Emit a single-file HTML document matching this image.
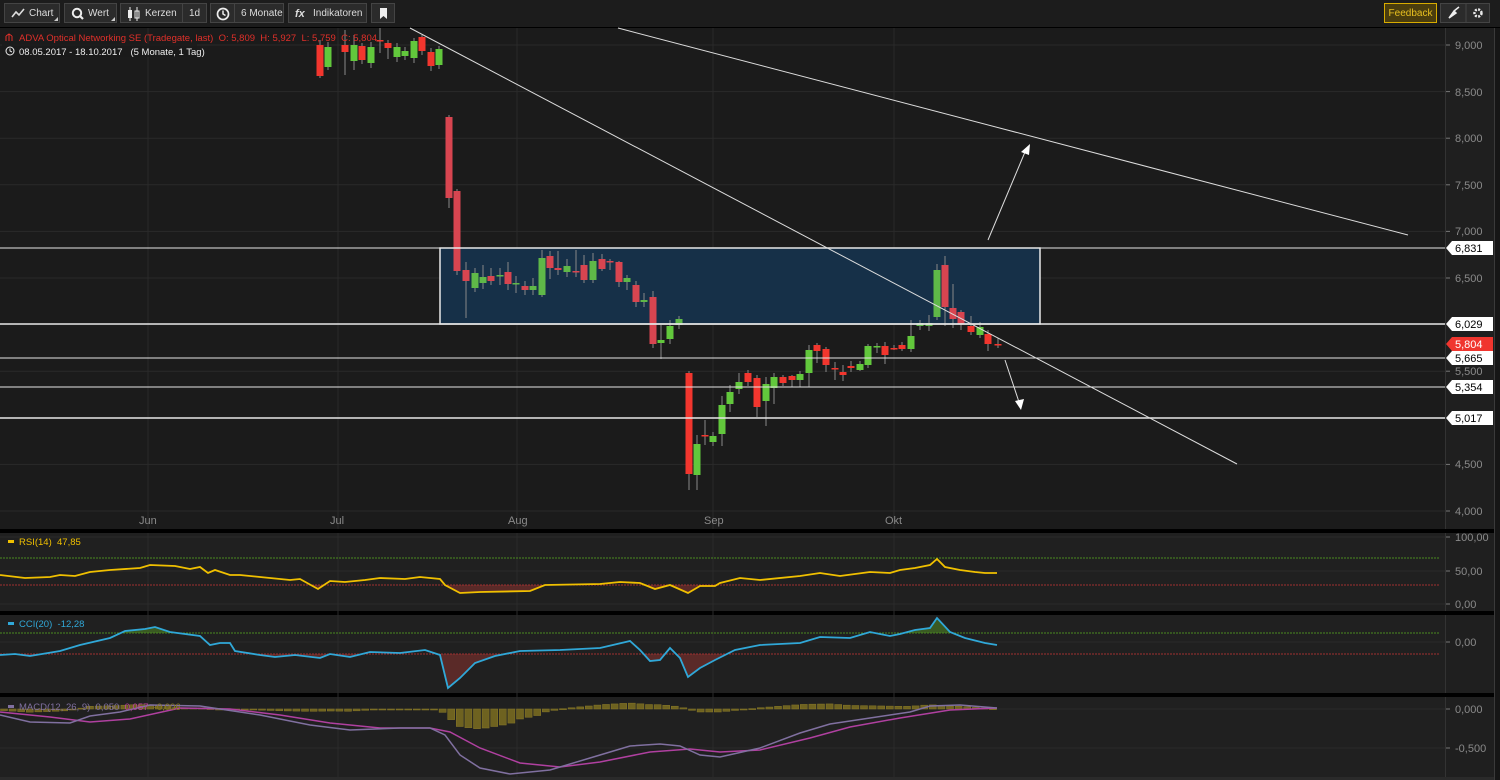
<!DOCTYPE html>
<html><head><meta charset="utf-8">
<style>
html,body{margin:0;padding:0;background:#1a1a1a;width:1500px;height:780px;overflow:hidden;font-family:"Liberation Sans",sans-serif;}
#tb{position:absolute;left:0;top:0;width:1500px;height:27px;background:#1c1c1c;border-bottom:1px solid #000;}
.b{position:absolute;top:3px;height:20px;background:#2b2b2b;border:1px solid #444;color:#ddd;font-size:10px;line-height:20px;box-sizing:border-box;}
.b span{position:absolute;top:0}
.tri{position:absolute;right:1px;bottom:1px;width:0;height:0;border-left:4px solid transparent;border-bottom:4px solid #ccc;}
.dv{position:absolute;top:0;width:1px;height:18px;background:#444;}
svg{position:absolute;left:0;top:0}
</style></head><body>
<div id="tb">
 <div class="b" style="left:4px;width:56px"><svg width="16" height="18" style="left:5px;top:1px"><polyline points="2,12 6,7 9,10 14,4" fill="none" stroke="#ddd" stroke-width="1.6"/></svg><span style="left:24px">Chart</span><div class="tri"></div></div>
 <div class="b" style="left:64px;width:53px"><svg width="16" height="18" style="left:5px;top:1px"><circle cx="7" cy="8" r="4.2" fill="none" stroke="#eee" stroke-width="2"/><line x1="10" y1="11" x2="13" y2="14" stroke="#eee" stroke-width="2.2"/></svg><span style="left:23px">Wert</span><div class="tri"></div></div>
 <div class="b" style="left:120px;width:87px"><svg width="18" height="18" style="left:5px;top:1px"><line x1="4" y1="2" x2="4" y2="16" stroke="#eee"/><rect x="2" y="5" width="4" height="8" fill="#eee"/><line x1="11" y1="2" x2="11" y2="16" stroke="#eee"/><rect x="9" y="6" width="4" height="7" fill="none" stroke="#eee"/></svg><span style="left:24px">Kerzen</span><div class="dv" style="left:61px"></div><span style="left:68px">1d</span></div>
 <div class="b" style="left:210px;width:74px"><svg width="16" height="18" style="left:5px;top:1px"><circle cx="7" cy="9" r="5.5" fill="none" stroke="#eee" stroke-width="1.7"/><polyline points="7,5.5 7,9 9.5,10.5" fill="none" stroke="#eee" stroke-width="1.5"/></svg><div class="dv" style="left:23px"></div><span style="left:30px">6 Monate</span></div>
 <div class="b" style="left:288px;width:79px"><span style="left:6px;font-style:italic;font-weight:bold;font-size:11px">fx</span><span style="left:24px">Indikatoren</span></div>
 <div class="b" style="left:371px;width:24px"><svg width="12" height="18" style="left:6px;top:1px"><path d="M2,3 H9 V14 L5.5,11 L2,14 Z" fill="#eee"/></svg></div>
 <div class="b" style="left:1384px;width:53px;background:#4a3d0e;border-color:#d8ac00;color:#e8c020;text-align:center">Feedback</div>
 <div class="b" style="left:1440px;width:50px"><svg width="50" height="18" style="left:0;top:0"><path d="M8,14 L13,7 L15,9 Z M13,7 L18,3" fill="#eee" stroke="#eee" stroke-width="1.5"/><line x1="25" y1="0" x2="25" y2="18" stroke="#444"/><circle cx="37" cy="9" r="3.5" fill="none" stroke="#eee" stroke-width="2.5" stroke-dasharray="2 1.3"/></svg></div>
</div>
<svg id="s" width="1500" height="780" style="top:0">
 <rect x="0" y="28" width="1445" height="752" fill="#1b1b1b"/>
 <rect x="1445" y="28" width="49" height="752" fill="#1f1f1f"/>
 <line x1="1445.5" y1="28" x2="1445.5" y2="780" stroke="#333"/>
 <rect x="1494" y="28" width="6" height="752" fill="#161616"/>
 <line x1="1494.5" y1="28" x2="1494.5" y2="780" stroke="#3a3a3a"/>
 <rect x="0" y="533" width="1445" height="78" fill="#202020"/>
 <rect x="0" y="615" width="1445" height="78" fill="#202020"/>
 <rect x="0" y="697" width="1445" height="80" fill="#202020"/>
 <rect x="0" y="529" width="1494" height="4" fill="#000"/>
 <rect x="0" y="611" width="1494" height="4" fill="#000"/>
 <rect x="0" y="693" width="1494" height="4" fill="#000"/>
 <rect x="0" y="777" width="1494" height="3" fill="#2a2a2a"/>
 <g id="grid" stroke="#2a2a2a" stroke-width="1"></g>
 <g id="main"></g>
 <g font-size="11" fill="#8a8a8a" font-family="Liberation Sans, sans-serif">
  <text x="139" y="524">Jun</text><text x="330" y="524">Jul</text><text x="508" y="524">Aug</text><text x="704" y="524">Sep</text><text x="885" y="524">Okt</text>
  <text x="1455" y="49">9,000</text><text x="1455" y="96">8,500</text><text x="1455" y="142">8,000</text><text x="1455" y="189">7,500</text><text x="1455" y="235">7,000</text><text x="1455" y="282">6,500</text><text x="1455" y="375">5,500</text><text x="1455" y="468">4,500</text><text x="1455" y="515">4,000</text>
  <text x="1455" y="541">100,00</text><text x="1455" y="575">50,00</text><text x="1455" y="608">0,00</text>
  <text x="1455" y="646">0,00</text>
  <text x="1455" y="713">0,000</text><text x="1455" y="752">-0,500</text>
 </g>
 <g id="tags" font-size="11" font-family="Liberation Sans, sans-serif"></g>
 <rect x="2" y="44" width="195" height="13" fill="#1a1a1a" opacity=".8"/>
 <text x="19" y="41" font-size="9.5" fill="#e0302a" font-family="Liberation Sans, sans-serif">ADVA Optical Networking SE (Tradegate, last)&#160; O: 5,809&#160; H: 5,927&#160; L: 5,759&#160; C: 5,804</text>
 <path d="M6,41 v-5 M9,41 v-7 M12,41 v-5 M6,36 l3,-2 l3,2" stroke="#e0302a" fill="none"/>
 <circle cx="10" cy="51" r="4" fill="none" stroke="#eee"/><polyline points="10,48.5 10,51 12,52" fill="none" stroke="#eee"/>
 <text x="19" y="55" font-size="9.5" fill="#eee" font-family="Liberation Sans, sans-serif">08.05.2017 - 18.10.2017&#160;&#160; (5 Monate, 1 Tag)</text>
 <rect x="8" y="540" width="6" height="3" fill="#f0c000"/><text x="19" y="545" font-size="9.5" fill="#f0c000" font-family="Liberation Sans, sans-serif">RSI(14)&#160; 47,85</text>
 <rect x="8" y="622" width="6" height="3" fill="#30a8d8"/><text x="19" y="627" font-size="9.5" fill="#30a8d8" font-family="Liberation Sans, sans-serif">CCI(20)&#160; -12,28</text>
 <g id="macdlbl"></g>
</svg>
<script>
const NS="http://www.w3.org/2000/svg";
function el(p,t,a){const e=document.createElementNS(NS,t);for(const k in a)e.setAttribute(k,a[k]);p.appendChild(e);return e;}
const g=document.getElementById('grid'),m=document.getElementById('main'),tg=document.getElementById('tags');
[45,91.6,138.2,184.8,231.4,278,324.6,371.2,417.8,464.4,511].forEach(y=>el(g,'line',{x1:0,x2:1445,y1:y,y2:y}));
[537,571,604,642,709,748].forEach(y=>el(g,'line',{x1:0,x2:1445,y1:y,y2:y}));
[148,338,517,713,894].forEach(x=>{el(g,'line',{x1:x,x2:x,y1:28,y2:529});el(g,'line',{x1:x,x2:x,y1:533,y2:777});});
[45,91.6,138.2,184.8,231.4,278,371.2,464.4,511,537,571,604,642,709,748].forEach(y=>el(g,'line',{x1:1446,x2:1450,y1:y,y2:y,stroke:'#777'}));
el(m,'rect',{x:440,y:248,width:600,height:76,fill:'#163048',stroke:'none'});
const C=[[320,45,76,40,78],[328,67,47,42,70],[345,45,52,30,75],[354,61,45,35,70],[362,46,60,43,64],[371,63,47,42,68],[380,40,40,28,53],[388,43,48,40,59],[397,57,47,43,62],[405,56,51,47,60],[414,58,41,38,63],[422,37,51,35,55],[431,52,66,48,71],[439,65,49,46,69],
[449,117,198,115,208],[457,191,271,189,275],[466,270,281,262,318],[475,288,273,268,292],[483,283,277,265,289],[491,276,281,268,285],[500,276,275,268,285],[508,272,284,262,290],[516,284,283,276,293],[525,286,290,281,295],[533,290,286,278,295],[542,295,258,250,297],[550,256,268,251,279],[558,268,270,251,275],[567,272,266,259,277],[576,271,271,250,277],[584,265,280,255,283],[593,280,261,253,283],[602,259,269,254,271],[610,261,262,259,270],[619,262,282,261,287],[627,282,278,275,290],[636,285,302,281,307],[644,302,300,293,307],[653,297,344,291,348],[661,343,340,325,359],[670,339,326,320,344],[679,325,319,316,329],
[689,373,474,371,490],[697,475,444,435,490],[705,435,435,420,445],[713,442,436,432,446],[722,434,405,396,446],[730,404,392,385,412],[739,389,382,373,394],[748,373,382,370,386],[757,378,407,375,417],[766,401,384,377,426],[774,388,377,373,404],[783,377,383,375,386],[792,376,380,375,387],[800,380,374,371,387],[809,373,350,345,387],[817,345,351,343,363],[826,349,365,347,372],[835,368,368,362,380],[843,372,375,365,381],[851,366,368,361,372],[860,370,364,361,371],[868,365,346,344,368],[877,347,346,343,353],[885,346,355,342,364],[894,348,348,345,350],[902,345,349,342,351],[911,349,336,320,352],[920,326,323,320,330],[929,326,323,315,331],[937,317,270,264,320],[945,265,307,256,326],[953,308,319,284,328],[961,312,324,310,330],[971,326,332,316,335],[980,335,327,322,338],[988,334,344,330,351],[998,344,344,338,348]];
C.forEach(([x,o,c,h,l])=>{const up=c<o;const inb=x>440&&x<1040&&Math.min(o,c)<324;const col=up?(inb?'#5fb848':'#62c83c'):(inb?'#d84550':'#f2362e');
el(m,'line',{x1:x,x2:x,y1:h,y2:l,stroke:'#888','stroke-width':1});
el(m,'rect',{x:x-3.5,y:Math.min(o,c),width:7,height:Math.max(1.5,Math.abs(o-c)),fill:col});});
el(m,'rect',{x:440,y:248,width:600,height:76,fill:'none',stroke:'#e8e8e8','stroke-width':1.5});
[[248,1],[324,1.5],[358,1],[387,1],[418,1.5]].forEach(([y,w])=>el(m,'line',{x1:0,x2:1445,y1:y,y2:y,stroke:'#e6e6e6','stroke-width':w}));
el(m,'line',{x1:410,y1:28,x2:1237,y2:464,stroke:'#ddd','stroke-width':1});
el(m,'line',{x1:618,y1:28,x2:1408,y2:235,stroke:'#ddd','stroke-width':1});
el(m,'line',{x1:988,y1:240,x2:1025,y2:152,stroke:'#ddd'});el(m,'polygon',{points:'1030,144 1021,152 1029,155',fill:'#fff'});
el(m,'line',{x1:1005,y1:360,x2:1019,y2:402,stroke:'#ddd'});el(m,'polygon',{points:'1021,410 1015,401 1024,399',fill:'#fff'});
[[248,'6,831','#fff','#000'],[324,'6,029','#fff','#000'],[344,'5,804','#f0352e','#fff'],[358,'5,665','#fff','#000'],[387,'5,354','#fff','#000'],[418,'5,017','#fff','#000']].forEach(([y,t,bg,fg])=>{
el(tg,'polygon',{points:`1446,${y} 1452,${y-7} 1493,${y-7} 1493,${y+7} 1452,${y+7}`,fill:bg});
const tx=el(tg,'text',{x:1455,y:y+4,fill:fg});tx.textContent=t;});
function interp(pts,x){for(let i=0;i<pts.length-1;i++){if(x>=pts[i][0]&&x<=pts[i+1][0]){const t=(x-pts[i][0])/(pts[i+1][0]-pts[i][0]);return pts[i][1]+t*(pts[i+1][1]-pts[i][1]);}}return pts[pts.length-1][1];}
function P(s){const a=s.split(/[ ,]+/).map(Number),r=[];for(let i=0;i<a.length;i+=2)r.push([a[i],a[i+1]]);return r;}
function fillBand(pts,ref,above,col){let x0=pts[0][0],x1=pts[pts.length-1][0];let poly=[];for(let x=x0;x<=x1;x++){let y=interp(pts,x);y=above?Math.min(y,ref):Math.max(y,ref);poly.push(x+','+y.toFixed(1));}el(m,'polygon',{points:x0+','+ref+' '+poly.join(' ')+' '+x1+','+ref,fill:col});}
const rsi=P("0,575 25,578 50,577 60,575 75,576 90,572 110,570 140,568 150,565 175,566 190,569 200,567 208,573 215,570 230,575 240,575 260,577 290,580 300,579 318,589 330,581 345,582 355,581 365,580 380,578 405,579 420,577 440,579 445,585 460,593 480,592 530,591 545,585 600,584 620,582 640,583 655,589 670,585 688,593 700,586 715,586 720,583 740,578 760,580 800,576 820,573 840,576 870,572 890,573 900,570 915,568 930,565 937,559 945,567 960,570 975,572 985,573 997,573");
fillBand(rsi,585,false,'#5a2a28');
el(m,'line',{x1:0,x2:1440,y1:558,y2:558,stroke:'#4a8a20','stroke-dasharray':'2 1'});
el(m,'line',{x1:0,x2:1440,y1:585,y2:585,stroke:'#a03030','stroke-dasharray':'2 1'});
el(m,'polyline',{points:rsi.map(p=>p.join(',')).join(' '),fill:'none',stroke:'#f0c000','stroke-width':1.8});
const cci=P("0,655 15,654 30,656 60,651 80,645 110,638 125,631 145,629 155,627 170,632 200,636 210,645 220,643 230,643 235,651 260,655 275,657 295,655 320,658 330,654 350,657 370,652 400,653 425,650 440,655 448,688 460,678 475,663 495,656 520,651 560,650 600,648 630,641 640,650 650,661 660,660 670,648 680,658 688,677 700,668 715,660 735,650 760,645 800,643 820,637 850,638 870,632 890,636 900,634 915,630 930,628 937,618 950,632 965,638 985,643 997,645");
fillBand(cci,633,true,'#3a5a22');fillBand(cci,654,false,'#5a2a28');
el(m,'line',{x1:0,x2:1440,y1:633,y2:633,stroke:'#4a8a20','stroke-dasharray':'2 1'});
el(m,'line',{x1:0,x2:1440,y1:654,y2:654,stroke:'#a03030','stroke-dasharray':'2 1'});
el(m,'polyline',{points:cci.map(p=>p.join(',')).join(' '),fill:'none',stroke:'#30a8d8','stroke-width':1.8});
const mac=P("0,715 30,722 70,723 90,716 120,712 150,705 200,706 260,715 310,725 350,730 400,728 430,728 445,735 460,755 480,768 510,774 550,770 600,755 630,746 660,744 680,746 700,755 720,757 760,748 800,733 830,724 870,718 910,712 930,706 960,705 997,708");
const sig=P("0,712 50,717 90,722 130,719 180,708 230,709 280,715 330,723 380,728 430,728 450,732 480,748 520,763 560,767 600,762 650,752 690,749 720,752 760,750 810,738 850,727 900,718 950,710 997,708");
for(let x=4;x<=998;x+=8.6){let d=(interp(mac,x)-interp(sig,x));d*= x<440?0.45:(x<540?1.0:0.6);el(m,'rect',{x:x-3.5,y:d>0?709:709+d,width:7,height:Math.max(1,Math.abs(d)),fill:'#6e6220',stroke:'#8a7a28','stroke-width':0.5});}
el(m,'polyline',{points:sig.map(p=>p.join(',')).join(' '),fill:'none',stroke:'#b040a0','stroke-width':1.5});
el(m,'polyline',{points:mac.map(p=>p.join(',')).join(' '),fill:'none',stroke:'#8070a0','stroke-width':1.5});
const ml=document.getElementById('macdlbl');
el(ml,'rect',{x:8,y:705,width:6,height:3,fill:'#8070a0'});
const t=el(ml,'text',{x:19,y:710,'font-size':'9.5','font-family':'Liberation Sans, sans-serif'});
t.innerHTML='<tspan fill="#8070a0">MACD(12, 26, 9)\u00a0 0,050\u00a0 </tspan><tspan fill="#c040a0">0,057\u00a0 </tspan><tspan fill="#8a7a20">-0,006</tspan>';
</script>
</body></html>
